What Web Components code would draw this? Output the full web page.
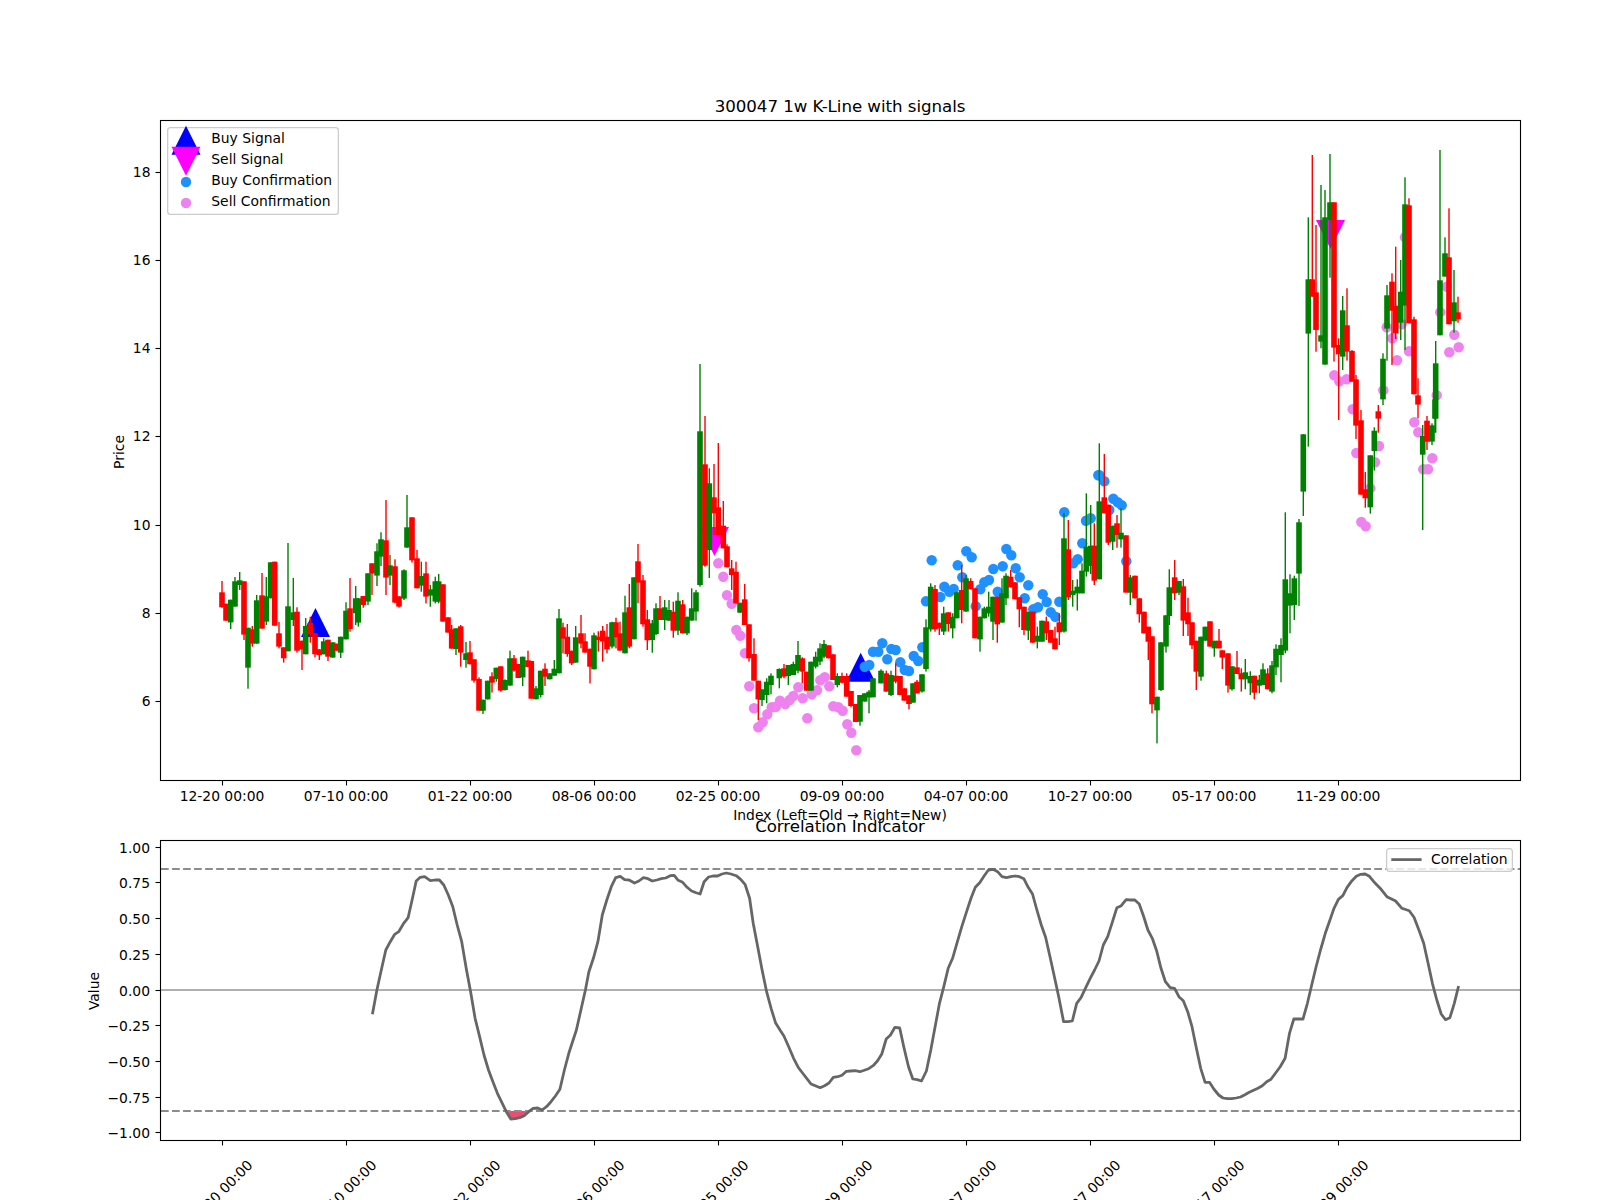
<!DOCTYPE html>
<html lang="en">
<head>
<meta charset="utf-8">
<title>300047 1w K-Line with signals</title>
<style>
html,body{margin:0;padding:0;background:#fff;overflow:hidden;height:1200px}
</style>
</head>
<body>
<mpl-figure>
  <kline-axes>
    <axes-legend style="left:167.3px;top:7.3px;width:171.4px;height:88px">
      <legend-entry kind="buy-signal">Buy Signal</legend-entry>
      <legend-entry kind="sell-signal">Sell Signal</legend-entry>
      <legend-entry kind="buy-dot">Buy Confirmation</legend-entry>
      <legend-entry kind="sell-dot">Sell Confirmation</legend-entry>
    </axes-legend>
  </kline-axes>
  <corr-axes>
    <axes-legend style="left:1386.4px;top:7.7px;width:127px;height:24.6px">
      <legend-entry kind="line">Correlation</legend-entry>
    </axes-legend>
  </corr-axes>
</mpl-figure>
<script>
const FONT = '"DejaVu Sans","Liberation Sans",sans-serif';
const TICK_I = [0,30,60,90,120,150,180,210,240,270];
const DATES = ['12-20','07-10','01-22','08-06','02-25','09-09','04-07','10-27','05-17','11-29'];
const tickX = i => Math.round(222.3 + i * 4.1333) + 0.5;

/* candles: [x, colour, bodyTop, bodyBottom, wickTop, wickBottom] in crop coordinates */
const C2 = [[216,'r',457,502,423,503],[228,'r',491,542,491,542],[242,'g',479,547,479,567],[255,'g',424,500,411,500],[269,'g',421,435,396,450],[282,'r',424,584,424,600],[294,'g',563,683,563,746],[307,'r',568,611,558,620],[320,'g',481,611,465,611],[336,'r',466,566,399,566],[349,'g',469,545,411,555],[362,'g',367,475,367,475],[374,'r',365,557,365,557],[387,'r',580,620,546,625],[401,'r',622,655,622,668],[414,'g',499,634,309,634],[430,'g',517,540,414,558],[441,'r',515,632,502,638],[456,'r',602,628,602,690],[467,'g',558,643,534,643],[481,'r',549,583,530,608],[495,'r',580,643,580,652],[508,'r',628,645,628,660],[521,'g',604,643,595,643],[534,'r',599,650,599,663],[548,'g',607,653,607,653],[560,'r',611,632,611,632],[572,'g',590,638,590,654],[588,'g',512,598,487,598],[600,'r',505,567,414,575],[617,'g',475,520,438,555],[625,'g',475,548,475,560],[640,'r',468,495,468,503],[654,'g',400,485,400,495],[666,'r',370,401,370,465],[681,'g',334,407,310,438],[693,'g',298,350,277,378],[708,'r',301,413,180,465],[720,'g',376,407,345,435],[735,'r',379,488,358,490],[747,'r',469,500,469,503],[762,'g',391,476,388,480],[771,'g',262,323,165,323],[786,'r',232,361,232,368],[801,'r',355,445,330,445],[814,'g',408,437,365,455],[828,'r',400,470,365,490],[841,'g',448,467,435,500],[856,'g',424,485,410,490],[866,'g',424,485,402,490],[879,'r',433,545,433,545],[894,'r',532,578,532,578],[905,'r',568,626,555,626],[918,'g',565,627,565,645],[932,'r',559,638,555,680],[948,'g',640,660,606,683],[960,'r',637,673,603,673],[972,'r',658,722,658,728],[987,'r',717,812,712,812],[999,'g',779,812,779,822],[1013,'g',722,778,722,778],[1026,'r',709,728,697,758],[1039,'g',683,717,683,725],[1052,'r',679,752,679,755],[1065,'g',720,750,718,752],[1080,'g',655,737,632,737],[1092,'r',655,692,645,695],[1105,'r',672,714,672,714],[1118,'g',650,712,650,738],[1134,'r',661,681,632,681],[1144,'r',663,776,663,776],[1158,'g',745,778,738,778],[1172,'g',692,765,692,772],[1185,'r',686,710,670,738],[1199,'g',700,718,700,718],[1213,'g',686,707,660,707],[1227,'g',535,700,507,700],[1239,'r',562,596,548,640],[1252,'r',590,642,552,650],[1265,'r',632,670,632,675],[1277,'g',592,668,558,668],[1293,'r',580,611,525,625],[1305,'r',604,638,580,638],[1320,'r',626,680,626,730],[1332,'g',586,688,578,688],[1345,'r',590,600,574,635],[1358,'r',572,604,558,665],[1371,'r',590,628,552,640],[1386,'g',547,620,545,625],[1398,'r',547,592,533,625],[1410,'r',580,632,545,632],[1425,'g',517,640,467,640],[1438,'r',502,620,432,625],[1452,'g',412,598,412,598],[1464,'r',364,428,312,490],[1479,'r',421,553,405,560],[1492,'r',538,601,510,630]];
const C3 = [[7,'g',820,870,810,908],[18,'g',775,852,760,855],[30,'r',775,810,738,810],[44,'g',772,810,750,840],[57,'g',780,812,750,812],[70,'r',785,842,755,863],[84,'g',752,842,727,855],[98,'r',763,850,750,850],[111,'g',800,850,800,855],[125,'g',775,812,715,812],[138,'g',727,785,720,812],[150,'g',244,705,42,710],[165,'r',343,647,198,650],[178,'g',400,600,355,684],[192,'r',442,490,342,555],[205,'r',472,555,279,556],[220,'r',527,595,453,595],[231,'r',589,652,583,652],[245,'r',655,675,630,720],[258,'r',665,760,635,760],[270,'g',758,788,758,788],[284,'r',748,825,702,825],[297,'r',823,925,823,935],[312,'r',912,992,865,992],[325,'r',992,1048,992,1110],[336,'g',1018,1050,1018,1068],[350,'g',995,1035,985,1060],[363,'g',977,1005,970,1033],[388,'g',957,985,955,1015],[402,'r',955,980,942,985],[415,'g',945,978,945,1005],[430,'g',942,975,935,975],[444,'g',915,962,873,970],[457,'r',925,965,922,1000],[470,'r',965,1022,965,1022],[483,'g',935,1022,935,1022],[497,'g',920,950,905,955],[510,'g',895,935,880,945],[522,'g',882,920,870,925],[536,'r',886,925,886,925],[549,'r',913,990,913,990],[562,'g',978,1005,970,1012],[576,'r',978,998,968,1000],[590,'r',978,1040,970,1040],[603,'r',1023,1068,1023,1072],[617,'r',1062,1116,1062,1116],[630,'g',1035,1115,1035,1127],[644,'g',1030,1055,1030,1055],[657,'g',1025,1042,1020,1090],[669,'g',985,1042,985,1042],[693,'g',962,1000,958,1000],[709,'r',970,1025,962,1025],[723,'g',975,1035,962,1038],[737,'r',977,995,940,1000],[750,'r',978,1035,978,1035],[763,'r',1015,1052,1015,1052],[777,'r',1036,1062,1036,1078],[789,'g',1000,1058,1000,1058],[801,'r',995,1030,990,1030],[816,'g',973,1025,973,1028],[828,'g',832,957,808,965],[842,'g',710,838,700,845],[855,'r',717,838,705,845],[868,'r',818,835,818,855],[881,'g',790,845,770,855],[895,'r',787,822,787,845],[908,'g',800,835,790,865],[920,'g',727,805,727,805],[935,'r',720,780,645,820],[948,'g',685,785,675,785],[962,'r',693,718,685,718],[975,'r',715,865,715,865],[990,'g',800,868,800,905],[1003,'g',775,805,770,805],[1016,'g',770,790,725,800],[1029,'g',740,815,740,870],[1042,'r',740,823,740,878],[1056,'g',730,818,685,818],[1068,'g',677,745,670,765],[1082,'r',680,712,660,712],[1095,'r',697,748,697,748],[1108,'r',742,778,742,832],[1122,'r',770,840,770,855],[1135,'g',785,842,785,870],[1148,'r',785,878,785,878],[1162,'g',857,875,830,895],[1176,'g',812,875,812,875],[1189,'r',814,850,800,870],[1202,'r',840,878,840,878],[1215,'r',865,898,830,898],[1228,'r',817,847,790,885],[1242,'g',565,845,490,848],[1255,'r',598,742,510,750],[1268,'g',722,735,690,770],[1282,'g',710,730,688,782],[1296,'g',662,730,640,730],[1309,'g',590,665,430,680],[1322,'g',587,648,465,672],[1333,'r',587,692,520,705]];
const C5 = [[148,'g',214,448,40,448],[163,'r',202,250,72,250],[175,'r',224,338,224,345],[188,'g',287,335,287,360],[201,'r',280,315,255,353],[213,'g',308,328,235,353],[228,'r',316,488,316,488],[241,'g',442,488,435,525],[255,'r',437,505,437,505],[268,'r',505,553,505,578],[282,'r',545,610,545,610],[295,'r',590,635,590,690],[306,'r',619,823,619,850],[321,'g',800,841,800,940],[333,'g',637,780,637,783],[348,'g',556,650,556,668],[358,'g',472,558,418,585],[374,'r',442,490,390,510],[387,'g',453,488,453,495],[400,'r',469,572,447,618],[414,'r',547,583,503,618],[426,'r',577,646,577,657],[439,'r',632,725,632,780],[453,'g',620,740,620,752],[466,'g',590,632,590,632],[480,'r',574,650,574,650],[493,'g',632,655,632,680],[507,'r',632,655,597,655],[517,'r',661,683,661,717],[534,'r',670,767,670,788],[546,'g',709,778,709,782],[561,'r',712,732,663,732],[574,'r',730,748,715,785],[586,'g',727,748,687,778],[601,'g',738,760,724,795],[613,'r',737,788,737,808],[628,'g',749,767,735,790],[639,'g',718,765,700,765],[653,'r',730,778,715,778],[666,'g',706,785,693,790],[678,'g',656,712,643,735],[693,'g',645,675,625,757],[706,'g',448,662,247,670],[720,'g',490,527,433,610],[733,'g',445,525,437,570],[747,'g',277,431,267,528]];
const C4 = [[760,'g',913,1085,913,1158],[775,'g',448,611,262,950],[787,'r',448,500,75,500],[798,'r',487,600,285,665],[813,'g',616,635,165,655],[825,'g',262,704,180,704],[840,'g',217,270,72,443],[852,'r',217,653,217,695],[866,'r',645,673,625,870],[878,'g',541,680,498,720],[891,'r',586,665,475,692],[906,'r',663,755,660,755],[918,'r',748,887,735,927],[933,'r',871,1094,840,1094],[946,'r',1078,1105,1026,1133],[961,'g',976,1132,976,1151],[973,'g',902,963,892,1022],[985,'r',844,866,825,908],[999,'g',686,808,670,825],[1011,'g',496,596,465,692],[1026,'r',455,542,430,705],[1037,'r',527,610,350,627],[1052,'g',485,578,390,630],[1065,'g',223,527,142,660],[1077,'r',226,580,205,580],[1092,'r',568,793,560,793],[1104,'r',796,824,745,865],[1118,'g',918,974,885,1200],[1131,'r',872,935,858,960],[1146,'g',886,935,880,945],[1155,'g',808,866,808,908],[1157,'g',700,866,633,908],[1170,'g',451,616,60,616],[1185,'g',370,440,322,440],[1197,'r',382,583,235,583],[1212,'g',517,574,420,608],[1224,'r',547,568,500,578]];
const conv = (list, x0, y0) => list.map(c => [x0 + c[0]/3, c[1], y0 + c[2]/3, y0 + c[3]/3, y0 + c[4]/3, y0 + c[5]/3]);
const CANDLES = [...conv(C2,150,440), ...conv(C3,650,350), ...conv(C5,1050,430), ...conv(C4,1050,130)];

const P3 = [[205,640],[220,680],[231,736],[245,761],[259,840],[271,857],[285,910],[298,1009],[312,1075],[325,1132],[338,1117],[352,1093],[365,1072],[378,1070],[390,1052],[406,1062],[419,1050],[430,1038],[445,1012],[458,1045],[472,1105],[485,1033],[501,1021],[511,991],[524,982],[538,1009],[550,1069],[565,1072],[578,1082],[592,1123],[604,1148],[619,1201]];
const P4 = [[853,736],[868,754],[890,748],[908,838],[919,969],[934,1176],[947,1189],[961,1075],[975,997],[987,948],[1000,781],[1010,592],[1027,625],[1041,691],[1055,583],[1065,322],[1077,664],[1093,877],[1105,907],[1120,1018],[1134,1018],[1147,985],[1160,796],[1171,547],[1190,470],[1198,667],[1213,614],[1226,652]];
const B3 = [[644,950],[658,945],[669,905],[685,905],[697,880],[712,928],[724,897],[737,900],[751,937],[764,960],[777,963],[791,918],[805,933],[817,892],[828,754],[845,631],[871,741],[883,710],[898,725],[911,717],[923,646],[937,682],[949,604],[965,622],[977,769],[991,718],[1003,697],[1017,690],[1030,657],[1043,725],[1058,649],[1069,597],[1084,616],[1097,655],[1109,682],[1124,745],[1135,706],[1150,778],[1164,772],[1178,733],[1190,756],[1202,787],[1216,800],[1228,755],[1243,487],[1270,640],[1283,628],[1297,580],[1308,512],[1322,505],[1345,376]];
const B5 = [[148,136],[163,154],[178,240],[190,206],[203,217],[215,226],[229,394]];
const PINK = [...P3.map(p=>[650+p[0]/3,350+p[1]/3]), ...P4.map(p=>[1050+p[0]/3,130+p[1]/3])];
const BLUE = [...B3.map(p=>[650+p[0]/3,350+p[1]/3]), ...B5.map(p=>[1050+p[0]/3,430+p[1]/3])];

const L6 = [[655,643],[665,570],[675,510],[685,450],[695,425],[705,403],[714,395],[725,370],[735,353],[744,300],[753,243],[762,232],[772,230],[785,242],[795,240],[805,240],[815,255],[825,285],[835,320],[845,375],[855,425],[865,505],[875,575],[885,655],[895,710],[905,765],[915,810],[925,845],[935,880],[945,908],[955,935],[965,957],[975,956],[985,953],[995,947],[1005,935],[1015,925],[1025,924],[1035,930],[1045,920],[1055,905],[1065,888],[1075,868],[1085,810],[1095,760],[1112,690],[1122,630],[1132,570],[1140,515],[1150,475],[1160,425],[1170,345],[1180,300],[1190,260],[1200,233],[1210,229],[1220,239],[1230,240],[1242,249],[1252,243],[1262,233],[1272,236],[1282,243],[1292,240],[1302,236],[1312,234],[1322,227],[1331,226],[1340,241],[1350,247],[1360,262],[1370,273],[1380,278],[1389,282],[1398,245],[1408,231],[1418,228],[1428,228],[1438,222],[1448,219],[1458,222],[1470,227],[1480,238],[1490,254],[1500,295],[1508,370],[1518,440],[1528,510],[1538,575],[1548,625],[1558,668]];
const L7 = [[0,690],[8,708],[18,740],[28,775],[38,803],[48,822],[55,835],[64,852],[74,858],[83,863],[92,857],[101,849],[110,832],[119,830],[128,826],[137,814],[146,813],[155,812],[165,815],[174,811],[183,806],[192,797],[201,783],[210,762],[219,717],[228,705],[237,682],[247,684],[256,745],[265,800],[274,837],[283,839],[292,843],[302,813],[311,750],[320,680],[329,610],[338,560],[347,505],[356,475],[366,425],[375,380],[385,335],[394,295],[403,262],[412,248],[421,228],[430,210],[440,208],[449,215],[458,230],[467,233],[476,230],[485,228],[494,230],[503,236],[512,262],[521,282],[530,330],[539,375],[548,412],[557,470],[566,530],[575,590],[585,665],[594,665],[603,663],[612,610],[621,593],[630,565],[640,535],[649,510],[658,483],[667,435],[676,410],[686,365],[695,323],[704,317],[714,299],[723,300],[732,300],[741,312],[750,348],[759,390],[768,415],[777,452],[786,505],[795,545],[805,563],[814,565],[823,590],[832,602],[841,635],[850,680],[859,745],[868,805],[877,847],[886,847],[895,867],[905,885],[914,894],[923,896],[932,896],[941,894],[950,891],[959,884],[968,877],[977,871],[986,865],[995,857],[1004,845],[1013,838],[1022,820],[1032,800],[1042,775],[1051,700],[1060,657],[1069,657],[1079,657],[1088,610],[1097,555],[1106,500],[1115,450],[1125,400],[1134,362],[1143,325],[1152,298],[1161,287],[1170,262],[1180,242],[1189,229],[1198,223],[1207,222],[1216,229],[1225,245],[1240,268],[1252,290],[1270,303],[1283,325],[1298,332],[1308,352],[1318,390],[1328,430],[1337,490],[1346,550],[1355,600],[1364,642],[1373,659],[1382,653],[1391,610],[1400,558]];
const CORR = [...L6.map(p=>[80+p[0]/2.24,800+p[1]/3]), ...L7.map(p=>[780+p[0]/2.063,800+p[1]/3])];
const path = pts => pts.map(p => p[0].toFixed(1)+','+p[1].toFixed(1)).join(' ');
const dn = (cx,top) => `<polygon points="${cx-14.5},${top} ${cx+14.5},${top} ${cx},${top+29}" fill="#f0f"/>`;
const up = (cx,base) => `<polygon points="${cx-14.5},${base} ${cx+14.5},${base} ${cx},${base-29}" fill="#00f"/>`;

class MplFigure extends HTMLElement {
  constructor(){ super();
    this.attachShadow({mode:'open'}).innerHTML = `<style>
      :host{display:flex;flex-direction:column;gap:60px;box-sizing:border-box;width:1600px;height:1200px;padding-top:120px;overflow:hidden;background:#fff;font-family:${FONT};color:#000}
    </style><slot></slot>`;
  }
}
const axesStyle = h => `<style>
  :host{display:block;position:relative;width:1600px;height:${h}px;flex:none}
  svg{display:block;overflow:visible;width:1600px;height:${h}px}
  text{font-family:${FONT};font-size:13.89px;fill:#000}
  .title{font-size:16.67px;text-anchor:middle;letter-spacing:-.05px}
  .m{text-anchor:middle}.e{text-anchor:end}
</style>`;
class KlineAxes extends HTMLElement {
  constructor(){ super();
    let g = '';
    g += up(315.5,637) + up(860.7,681.7) + dn(714.5,527) + dn(1330.5,220);
    BLUE.forEach(p => g += `<circle cx="${p[0].toFixed(1)}" cy="${p[1].toFixed(1)}" r="5.2" fill="#1e90ff"/>`);
    PINK.forEach(p => g += `<circle cx="${p[0].toFixed(1)}" cy="${p[1].toFixed(1)}" r="5.2" fill="#ee82ee"/>`);
    CANDLES.forEach(c => {
      const col = c[1]==='r' ? '#f00' : '#008000', x = c[0];
      g += `<rect x="${(x-.7).toFixed(1)}" y="${c[4].toFixed(1)}" width="1.4" height="${(c[5]-c[4]).toFixed(1)}" fill="${col}"/>`;
      g += `<rect x="${(x-2.8).toFixed(1)}" y="${c[2].toFixed(1)}" width="5.6" height="${(c[3]-c[2]).toFixed(1)}" fill="${col}"/>`;
    });
    let t = '';
    TICK_I.forEach((i,k) => { const x = tickX(i);
      t += `<line x1="${x}" x2="${x}" y1="780.5" y2="785.5" stroke="#000" stroke-width="1.1"/>`;
      t += `<text class="m" x="${x-.5}" y="801">${DATES[k]} 00:00</text>`;
    });
    [[18,172.5],[16,260.5],[14,348.5],[12,436.5],[10,525.5],[8,613.5],[6,701.5]].forEach(([v,y]) => {
      t += `<line x1="155.5" x2="160.5" y1="${y}" y2="${y}" stroke="#000" stroke-width="1.1"/>`;
      t += `<text class="e" x="150.5" y="${y+4}">${v}</text>`;
    });
    this.attachShadow({mode:'open'}).innerHTML = axesStyle(660) + `
      <svg viewBox="0 120 1600 660" aria-label="K-line chart">
        ${g}
        <rect x="160.5" y="120.5" width="1360" height="660" fill="none" stroke="#000" stroke-width="1.1"/>
        ${t}
        <text class="title" x="840" y="112">300047 1w K-Line with signals</text>
        <text class="m" x="840" y="820">Index (Left=Old → Right=New)</text>
        <text class="m" transform="translate(124,452) rotate(-90)">Price</text>
      </svg><slot></slot>`;
  }
}
class CorrAxes extends HTMLElement {
  constructor(){ super();
    const Y = v => 990 - v*142.67;
    let t = '';
    TICK_I.forEach((i,k) => { const x = tickX(i);
      t += `<line x1="${x}" x2="${x}" y1="1140.5" y2="1145.5" stroke="#000" stroke-width="1.1"/>`;
      t += `<text transform="translate(${x+31},1166) rotate(-45)" class="e">${DATES[k]} 00:00</text>`;
    });
    ['1.00','0.75','0.50','0.25','0.00','−0.25','−0.50','−0.75','−1.00'].forEach((s,k) => {
      const y = Math.round(Y(1-k*.25)-.5)+.5;
      t += `<line x1="155.5" x2="160.5" y1="${y}" y2="${y}" stroke="#000" stroke-width="1.1"/>`;
      t += `<text class="e" x="150" y="${y+5}">${s}</text>`;
    });
    const basin = CORR.filter(p => p[0]>=506 && p[0]<=527 && p[1]>=1111);
    const poly = [[505.5,1111],...basin,[527,1111]];
    this.attachShadow({mode:'open'}).innerHTML = axesStyle(300) + `
      <svg viewBox="0 840 1600 300" aria-label="Correlation chart">
        <polygon points="${path(poly)}" fill="#ee4d6e"/>
        <line x1="161" x2="1520" y1="990" y2="990" stroke="#b0b0b0" stroke-width="2"/>
        <line x1="161" x2="1520" y1="869" y2="869" stroke="#8c8c8c" stroke-width="2.08" stroke-dasharray="7.7 3.33"/>
        <line x1="161" x2="1520" y1="1111" y2="1111" stroke="#8c8c8c" stroke-width="2.08" stroke-dasharray="7.7 3.33"/>
        <polyline points="${path(CORR)}" fill="none" stroke="#666" stroke-width="2.78" stroke-linejoin="round"/>
        <rect x="160.5" y="840.5" width="1360" height="300" fill="none" stroke="#000" stroke-width="1.1"/>
        ${t}
        <text class="title" x="840" y="832">Correlation Indicator</text>
        <text class="m" transform="translate(99,991) rotate(-90)">Value</text>
      </svg><slot></slot>`;
  }
}
class AxesLegend extends HTMLElement {
  constructor(){ super();
    this.attachShadow({mode:'open'}).innerHTML = `<style>
      :host{display:flex;flex-direction:column;position:absolute;box-sizing:border-box;box-shadow:inset 0 0 0 1.3px #ccc;border-radius:3.5px;background:rgba(255,255,255,.8);font-family:${FONT};font-size:13.89px;color:#000}
    </style><slot></slot>`;
  }
}
class LegendEntry extends HTMLElement {
  constructor(){ super();
    const k = this.getAttribute('kind');
    const marks = {
      'buy-signal':'<polygon points="0.5,27.7 29.5,27.7 15,-1.3" fill="#00f"/>',
      'sell-signal':'<polygon points="0.5,-1.3 29.5,-1.3 15,27.7" fill="#f0f"/>',
      'buy-dot':'<circle cx="15" cy="13" r="5.2" fill="#1e90ff"/>',
      'sell-dot':'<circle cx="15" cy="13" r="5.2" fill="#ee82ee"/>'
    };
    const line = k === 'line';
    this.attachShadow({mode:'open'}).innerHTML = `<style>
      :host{display:flex;align-items:center;height:${line?22.6:21}px;white-space:nowrap}
      svg{flex:none;overflow:visible;display:block}
    </style>` + (line
      ? `<svg width="44.6" height="22" viewBox="0 0 44.6 22"><line x1="5.3" x2="35.6" y1="11.6" y2="11.6" stroke="#666" stroke-width="2.78"/></svg>`
      : `<svg width="44" height="21" viewBox="-4 0 44 21">${marks[k]}</svg>`) + `<slot></slot>`;
  }
}
customElements.define('mpl-figure', MplFigure);
customElements.define('kline-axes', KlineAxes);
customElements.define('corr-axes', CorrAxes);
customElements.define('axes-legend', AxesLegend);
customElements.define('legend-entry', LegendEntry);
</script>
</body>
</html>
